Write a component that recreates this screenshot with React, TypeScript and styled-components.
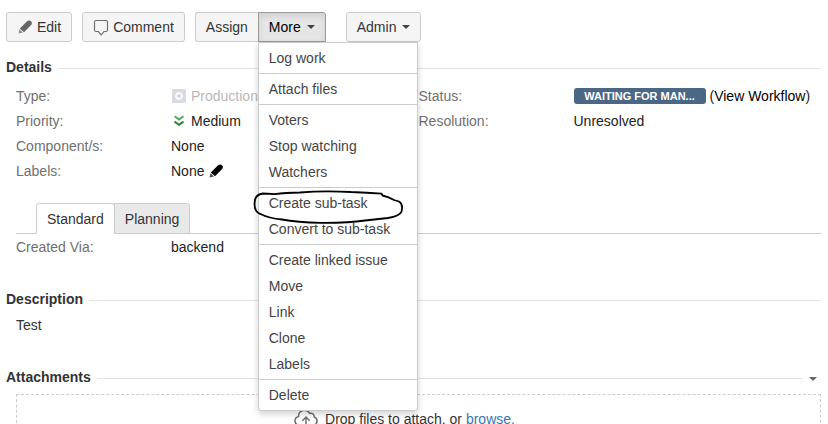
import React from "react";
import styled, { createGlobalStyle, css } from "styled-components";

const GlobalStyle = createGlobalStyle`
  * { box-sizing: border-box; }
  body {
    margin: 0;
    background: #fff;
    color: #333;
    font: 14px/20px "Liberation Sans", Arial, sans-serif;
  }
`;

const Page = styled.main`
  height: 100vh;
  overflow: hidden;
  padding: 12px 7px 0 6px;
`;

const Toolbar = styled.div`
  display: flex;
`;

const ButtonGroup = styled.div<{ $gap?: number }>`
  position: relative;
  display: flex;
  margin-right: ${(p) => p.$gap ?? 10}px;
`;

const ToolButton = styled.button<{ $active?: boolean }>`
  display: flex;
  align-items: center;
  gap: 4px;
  height: 30px;
  padding: 0 10px;
  border: 1px solid #ccc;
  border-radius: 3px;
  background: #f5f5f5;
  color: #333;
  font: inherit;
  white-space: nowrap;

  &:not(:last-of-type) {
    border-right: 0;
    border-radius: 3px 0 0 3px;
  }

  ${(p) =>
    p.$active &&
    css`
      border-color: #999;
      border-radius: 0 3px 0 0;
      background: #e6e6e6;
      color: #000;
      box-shadow: inset 0 3px 6px rgba(0, 0, 0, 0.1);
    `}
`;

const Caret = styled.span`
  margin-left: 2px;
  border: 4px solid transparent;
  border-top-color: #444;
  border-bottom: 0;
`;

const Menu = styled.div`
  position: absolute;
  z-index: 2;
  top: 30px;
  right: -92px;
  width: 160px;
  border: 1px solid #ccc;
  border-radius: 0 0 3px 3px;
  background: #fff;
  box-shadow: 0 3px 6px rgba(0, 0, 0, 0.18);
`;

const MenuSection = styled.ul`
  margin: 0;
  padding: 2px 0;
  list-style: none;

  & + & {
    border-top: 1px solid #ccc;
  }
`;

const MenuItem = styled.li`
  position: relative;
`;

const MenuLink = styled.a`
  display: block;
  padding: 3px 10px;
  color: #444;
  text-decoration: none;
`;

const Scribble = styled.svg`
  position: absolute;
  z-index: 1;
  top: -3px;
  left: -8px;
  pointer-events: none;
`;

const Section = styled.section<{ $space?: number }>`
  margin-top: ${(p) => p.$space ?? 0}px;
`;

const SectionHeader = styled.div`
  display: flex;
  align-items: center;
  gap: 6px;
  height: 20px;
`;

const Title = styled.h4`
  margin: 0;
  color: #333;
  font-size: 14px;
  line-height: 20px;
`;

const Rule = styled.span`
  flex: 1;
  height: 1px;
  margin-top: 2px;
  background: #e2e2e2;
`;

const MoreToggle = styled.button`
  display: flex;
  width: 12px;
  margin: 3px 0 0;
  padding: 0;
  border: 0;
  background: none;
`;

const ToggleCaret = styled(Caret)`
  margin: 0;
  border-top-color: #666;
`;

const Columns = styled.div`
  display: grid;
  grid-template-columns: 1fr 1fr;
  padding: 9px 0 0 10px;
`;

const Fields = styled.dl`
  display: grid;
  grid-template-columns: 155px minmax(0, 1fr);
  align-content: start;
  row-gap: 5px;
  margin: 0;
`;

const Label = styled.dt`
  color: #707070;
`;

const Value = styled.dd<{ $muted?: boolean }>`
  display: flex;
  align-items: center;
  gap: 4px;
  margin: 0;
  color: ${(p) => (p.$muted ? "#b8b8b8" : "#222")};
  white-space: nowrap;
`;

const Lozenge = styled.span`
  min-width: 132px;
  padding: 0 9px;
  border-radius: 3px;
  background: #4a6785;
  color: #fff;
  font-size: 11px;
  font-weight: bold;
  line-height: 16px;
  text-align: center;
`;

const PlainLink = styled.a`
  color: #000;
  text-decoration: none;
`;

const IconButton = styled.button`
  display: flex;
  padding: 0;
  border: 0;
  background: none;
  color: #000;
`;

const TabBar = styled.div`
  display: flex;
  margin: 22px 0 3px 10px;
  padding-left: 20px;
  border-bottom: 1px solid #ccc;
`;

const Tab = styled.button<{ $selected?: boolean }>`
  height: 31px;
  margin-bottom: -1px;
  padding: 0 10px;
  border: 1px solid #ccc;
  border-bottom-color: ${(p) => (p.$selected ? "#fff" : "#ccc")};
  border-radius: 3px 3px 0 0;
  background: ${(p) => (p.$selected ? "#fff" : "#e9e9e9")};
  color: #333;
  font: inherit;

  & + & {
    margin-left: -1px;
    border-top-left-radius: 0;
  }
`;

const TabPanel = styled.div`
  padding-left: 10px;
`;

const Text = styled.p`
  margin: 6px 0 0 10px;
`;

const DropZone = styled.div`
  display: flex;
  justify-content: center;
  gap: 7px;
  margin: 7px 0 0 10px;
  padding: 14px 28px 14px 0;
  border: 1px dashed #ccc;
`;

const BrowseLink = styled.a`
  color: #3b73af;
  text-decoration: none;
`;

const PencilIcon = ({ color = "#000" }: { color?: string }) => (
  <svg width="16" height="16" viewBox="0 0 16 16" fill={color} aria-hidden="true">
    <path d="M1.6 14.6 2.4 10.2 6 13.6Z" opacity=".7" />
    <path d="M2.8 9.4 9.8 2.6Q12 .8 13.9 2.3T14.1 6L7 13.2Z" />
  </svg>
);

const CommentIcon = () => (
  <svg width="16" height="17" viewBox="0 0 16 17" fill="none" stroke="#707070" strokeWidth="1.2" aria-hidden="true">
    <path d="M3 1.5H13Q14.5 1.5 14.5 3V11Q14.5 12.5 13 12.5H11L8.2 15.8 5.4 12.5H3Q1.5 12.5 1.5 11V3Q1.5 1.5 3 1.5Z" />
  </svg>
);

const TypeIcon = () => (
  <svg width="16" height="16" viewBox="0 0 16 16" aria-hidden="true">
    <rect x="1" y="1" width="14" height="14" rx="1.5" fill="#d8dbe1" />
    <circle cx="8" cy="8" r="3" fill="none" stroke="#fff" strokeWidth="1.6" />
  </svg>
);

const PriorityIcon = () => (
  <svg width="16" height="16" viewBox="0 0 16 16" fill="none" strokeWidth="2" aria-hidden="true">
    <path d="M3.5 3.2 8 6.4 12.5 3.2" stroke="#59ab61" />
    <path d="M3.5 8.6 8 11.8 12.5 8.6" stroke="#2a8735" />
  </svg>
);

const CloudIcon = () => (
  <svg width="24" height="20" viewBox="0 0 24 20" fill="none" stroke="#707070" strokeWidth="1.5" aria-hidden="true">
    <path d="M8 16H5.5C2.5 16 1 14 1 11.7 1 9.5 2.5 8 4.6 7.5 4.2 4 7 1.2 10.3 1.2 12.8 1.2 14.7 2.3 15.7 4.3 18.3 3.7 20.3 5.4 20.2 8 22 8.5 23 10 23 11.9 23 14.3 21.5 16 19 16H16" />
    <path d="M12 18V8.2M8.3 11.7 12 8 15.7 11.7" />
  </svg>
);

const HandDrawnLoop = () => (
  <Scribble width="156" height="40" viewBox="0 0 156 40" fill="none" stroke="#000" strokeWidth="1.8" strokeLinecap="round" strokeLinejoin="round" aria-hidden="true">
    <path d="M24 7.2 12 6.5Q5 7.5 4 13Q2 24 9 26.8Q18 31.5 31 32.5Q46 35.5 70 35.8Q97 36 114 33.5L137 31Q149 29 150.5 24.5Q152.5 17 148 14.5L143 13Q138 10 131.5 8.5L130.5 6.6Q116 5.5 100 5Q72 3.5 49 5.5Q34 5.5 24 7.2" />
  </Scribble>
);

const menu = [
  ["Log work"],
  ["Attach files"],
  ["Voters", "Stop watching", "Watchers"],
  ["Create sub-task", "Convert to sub-task"],
  ["Create linked issue", "Move", "Link", "Clone", "Labels"],
  ["Delete"],
];

export default function App() {
  return (
    <>
      <GlobalStyle />
      <Page>
        <Toolbar>
          <ButtonGroup>
            <ToolButton><PencilIcon color="#666" />Edit</ToolButton>
          </ButtonGroup>
          <ButtonGroup>
            <ToolButton><CommentIcon />Comment</ToolButton>
          </ButtonGroup>
          <ButtonGroup $gap={20}>
            <ToolButton>Assign</ToolButton>
            <ToolButton $active aria-haspopup="true" aria-expanded="true">More<Caret /></ToolButton>
            <Menu>
              {menu.map((items) => (
                <MenuSection key={items[0]}>
                  {items.map((item) => (
                    <MenuItem key={item}>
                      <MenuLink href="#">{item}</MenuLink>
                      {item === "Create sub-task" && <HandDrawnLoop />}
                    </MenuItem>
                  ))}
                </MenuSection>
              ))}
            </Menu>
          </ButtonGroup>
          <ButtonGroup>
            <ToolButton aria-haspopup="true">Admin<Caret /></ToolButton>
          </ButtonGroup>
        </Toolbar>

        <Section $space={15}>
          <SectionHeader><Title>Details</Title><Rule /></SectionHeader>
          <Columns>
            <Fields>
              <Label>Type:</Label>
              <Value $muted><TypeIcon />Production</Value>
              <Label>Priority:</Label>
              <Value><PriorityIcon />Medium</Value>
              <Label>Component/s:</Label>
              <Value>None</Value>
              <Label>Labels:</Label>
              <Value>None<IconButton aria-label="Edit labels"><PencilIcon /></IconButton></Value>
            </Fields>
            <Fields>
              <Label>Status:</Label>
              <Value>
                <Lozenge>WAITING FOR MAN...</Lozenge>
                <span>(<PlainLink href="#">View Workflow</PlainLink>)</span>
              </Value>
              <Label>Resolution:</Label>
              <Value>Unresolved</Value>
            </Fields>
          </Columns>
          <TabBar role="tablist">
            <Tab role="tab" aria-selected="true" $selected>Standard</Tab>
            <Tab role="tab" aria-selected="false">Planning</Tab>
          </TabBar>
          <TabPanel role="tabpanel">
            <Fields>
              <Label>Created Via:</Label>
              <Value>backend</Value>
            </Fields>
          </TabPanel>
        </Section>

        <Section $space={32}>
          <SectionHeader><Title>Description</Title><Rule /></SectionHeader>
          <Text>Test</Text>
        </Section>

        <Section $space={32}>
          <SectionHeader>
            <Title>Attachments</Title>
            <Rule />
            <MoreToggle aria-label="Attachment options"><ToggleCaret /></MoreToggle>
          </SectionHeader>
          <DropZone>
            <CloudIcon />
            <span>Drop files to attach, or <BrowseLink href="#">browse.</BrowseLink></span>
          </DropZone>
        </Section>
      </Page>
    </>
  );
}
